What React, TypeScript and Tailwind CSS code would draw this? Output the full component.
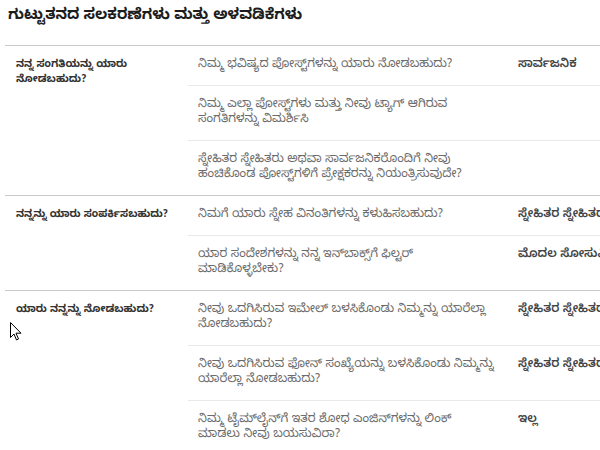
import React from "react";

type Row = { q: React.ReactNode; a?: string };
type Section = { title: React.ReactNode; rows: Row[] };

const sections: Section[] = [
  {
    title: (
      <>
        ನನ್ನ ಸಂಗತಿಯನ್ನು ಯಾರು
        <br />
        ನೋಡಬಹುದು?
      </>
    ),
    rows: [
      { q: "ನಿಮ್ಮ ಭವಿಷ್ಯದ ಪೋಸ್ಟ್‌ಗಳನ್ನು ಯಾರು ನೋಡಬಹುದು?", a: "ಸಾರ್ವಜನಿಕ" },
      {
        q: (
          <>
            ನಿಮ್ಮ ಎಲ್ಲಾ ಪೋಸ್ಟ್‌ಗಳು ಮತ್ತು ನೀವು ಟ್ಯಾಗ್ ಆಗಿರುವ
            <br />
            ಸಂಗತಿಗಳನ್ನು ವಿಮರ್ಶಿಸಿ
          </>
        ),
      },
      {
        q: (
          <>
            ಸ್ನೇಹಿತರ ಸ್ನೇಹಿತರು ಅಥವಾ ಸಾರ್ವಜನಿಕರೊಂದಿಗೆ ನೀವು
            <br />
            ಹಂಚಿಕೊಂಡ ಪೋಸ್ಟ್‌ಗಳಿಗೆ ಪ್ರೇಕ್ಷಕರನ್ನು ನಿಯಂತ್ರಿಸುವುದೇ?
          </>
        ),
      },
    ],
  },
  {
    title: <>ನನ್ನನ್ನು ಯಾರು ಸಂಪರ್ಕಿಸಬಹುದು?</>,
    rows: [
      { q: "ನಿಮಗೆ ಯಾರು ಸ್ನೇಹ ವಿನಂತಿಗಳನ್ನು ಕಳುಹಿಸಬಹುದು?", a: "ಸ್ನೇಹಿತರ ಸ್ನೇಹಿತರು" },
      {
        q: (
          <>
            ಯಾರ ಸಂದೇಶಗಳನ್ನು ನನ್ನ ಇನ್‌ಬಾಕ್ಸ್‌ಗೆ ಫಿಲ್ಟರ್
            <br />
            ಮಾಡಿಕೊಳ್ಳಬೇಕು?
          </>
        ),
        a: "ಮೊದಲ ಸೋಸುವಿಕೆ",
      },
    ],
  },
  {
    title: <>ಯಾರು ನನ್ನನ್ನು ನೋಡಬಹುದು?</>,
    rows: [
      {
        q: (
          <>
            ನೀವು ಒದಗಿಸಿರುವ ಇಮೇಲ್ ಬಳಸಿಕೊಂಡು ನಿಮ್ಮನ್ನು ಯಾರೆಲ್ಲಾ
            <br />
            ನೋಡಬಹುದು?
          </>
        ),
        a: "ಸ್ನೇಹಿತರ ಸ್ನೇಹಿತರು",
      },
      {
        q: (
          <>
            ನೀವು ಒದಗಿಸಿರುವ ಫೋನ್ ಸಂಖ್ಯೆಯನ್ನು ಬಳಸಿಕೊಂಡು ನಿಮ್ಮನ್ನು
            <br />
            ಯಾರೆಲ್ಲಾ ನೋಡಬಹುದು?
          </>
        ),
        a: "ಸ್ನೇಹಿತರ ಸ್ನೇಹಿತರು",
      },
      {
        q: (
          <>
            ನಿಮ್ಮ ಟೈಮ್‌ಲೈನ್‌ಗೆ ಇತರ ಶೋಧ ಎಂಜಿನ್‌ಗಳನ್ನು ಲಿಂಕ್
            <br />
            ಮಾಡಲು ನೀವು ಬಯಸುವಿರಾ?
          </>
        ),
        a: "ಇಲ್ಲ",
      },
    ],
  },
];

export default function App() {
  return (
    <div
      className="relative w-[600px] h-[450px] overflow-hidden bg-white"
      style={{ fontFamily: '"Noto Sans Kannada", "Noto Sans", "DejaVu Sans", sans-serif' }}
    >
      <h1 className="pl-2 pt-[7px] h-[45px] text-[15px] leading-[20px] font-bold text-[#1d1d1d] whitespace-nowrap">
        ಗುಟ್ಟುತನದ ಸಲಕರಣೆಗಳು ಮತ್ತು ಅಳವಡಿಕೆಗಳು
      </h1>
      <div className="ml-[5px] border-t border-[#c9c9c9]">
        {sections.map((s, i) => (
          <div key={i} className="flex border-b border-[#c9c9c9]">
            <div className="w-[183px] shrink-0 pl-[11px] pt-[13px] text-[10.5px] leading-[15px] font-bold text-[#333] whitespace-nowrap">
              {s.title}
            </div>
            <div className="flex-1 min-w-0">
              {s.rows.map((r, j) => (
                <div
                  key={j}
                  className={`flex py-[12px] leading-[15px] whitespace-nowrap ${
                    j > 0 ? "border-t border-[#e9e9e9]" : ""
                  }`}
                >
                  <div className="w-[320px] shrink-0 pl-[10px] text-[12px] text-[#6b6b6b]">{r.q}</div>
                  <div className="pl-[10px] text-[12px] font-semibold text-[#444]">{r.a}</div>
                </div>
              ))}
            </div>
          </div>
        ))}
      </div>
      <svg
        className="absolute left-[10px] top-[322px]"
        width="12"
        height="19"
        viewBox="0 0 12 19"
      >
        <path d="M0.5 0.5 L0.5 15.5 L4 12 L6.5 18 L8.5 17 L6 11.2 L11 11.2 Z" fill="white" stroke="black" strokeWidth="1" strokeLinejoin="round" />
      </svg>
    </div>
  );
}
